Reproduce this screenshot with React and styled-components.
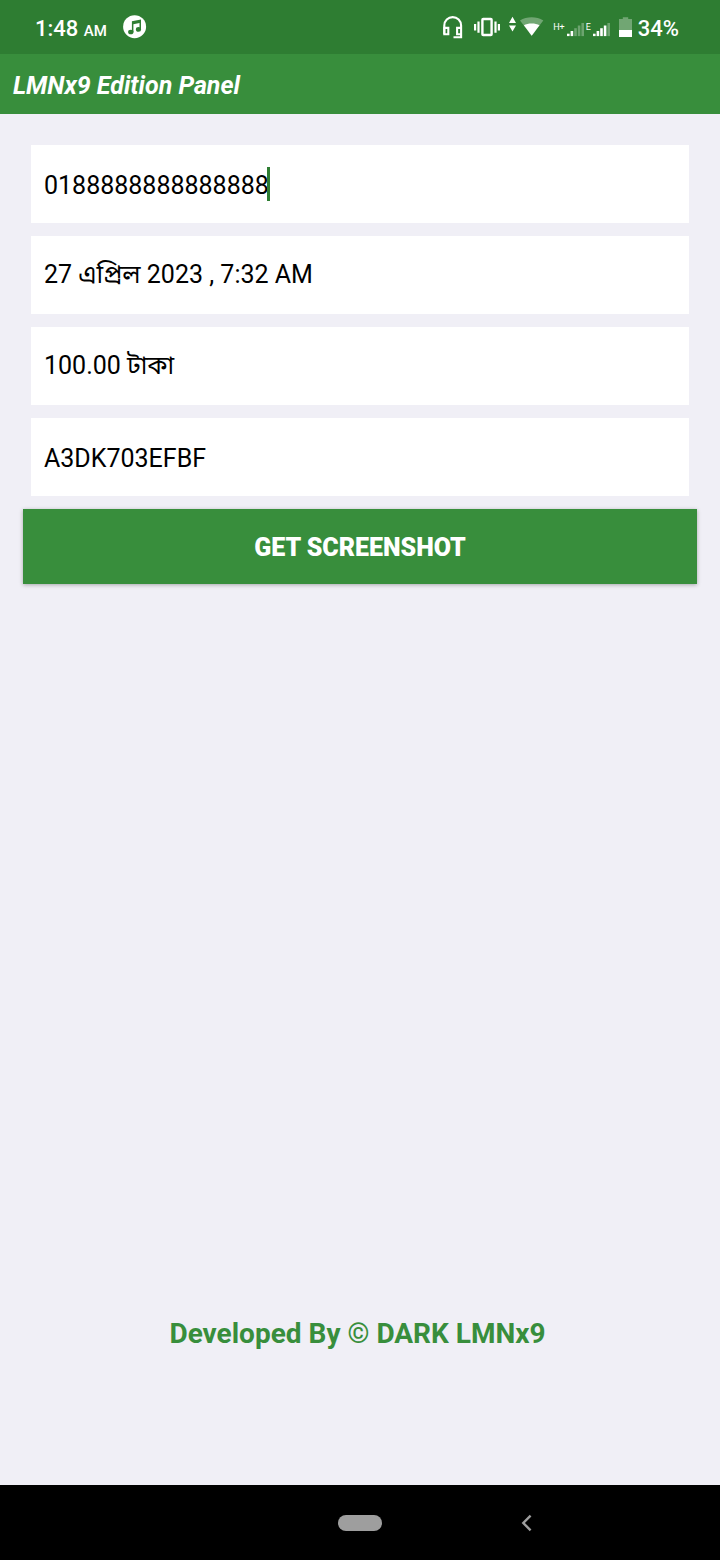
import React, { useState } from "react";
import styled, { createGlobalStyle } from "styled-components";

const GlobalStyle = createGlobalStyle`
  *, *::before, *::after { box-sizing: border-box; }
  body {
    margin: 0;
    background: #f0eff6;
    font-family: Roboto, "Noto Sans Bengali", "Noto Sans", sans-serif;
  }
`;

const Screen = styled.div`
  display: flex;
  flex-direction: column;
  min-height: 100vh;
`;

const StatusBar = styled.div`
  display: flex;
  align-items: center;
  justify-content: space-between;
  height: 54px;
  padding: 0 41px 0 35px;
  background: #2e7d32;
  color: #fff;
`;

const StatusGroup = styled.div`
  display: flex;
  align-items: center;
  gap: ${({ $gap }) => $gap}px;
`;

const StatusText = styled.span`
  padding-top: 4px;
  font-size: 22px;
  line-height: 26px;
  font-weight: 500;
`;

const Meridiem = styled.small`
  font-size: 15px;
  line-height: 1;
`;

const NetworkType = styled.span`
  font-size: 9px;
  line-height: 12px;
`;

const Icon = styled.svg`
  display: block;
  flex: none;
`;

const TitleBar = styled.header`
  display: flex;
  align-items: center;
  height: 60px;
  padding: 4px 13px 0;
  background: #388e3c;
  color: #fff;
`;

const Title = styled.h1`
  margin: 0;
  font-size: 25px;
  line-height: 30px;
  font-weight: 700;
  font-style: italic;
`;

const Content = styled.main`
  flex: 1;
  display: flex;
  flex-direction: column;
  padding: 31px 23px 0;
`;

const Form = styled.form`
  display: flex;
  flex-direction: column;
  gap: 13px;
`;

const Field = styled.label`
  display: flex;
  align-items: center;
  height: 78px;
  margin: 0 8px;
  padding: 0 13px;
  background: #fff;
`;

const TextInput = styled.input`
  width: ${({ $chars }) => ($chars ? `${$chars}ch` : "100%")};
  height: 58px;
  padding: 2px 0 0;
  border: 0;
  outline: 0;
  background: transparent;
  color: #000;
  font-family: inherit;
  font-size: 25px;
  line-height: 56px;
  caret-color: ${({ $chars }) => ($chars ? "transparent" : "#2e7d32")};
`;

const Caret = styled.span`
  width: 3px;
  height: 34px;
  margin-left: -2px;
  background: #2e7d32;
`;

const SubmitButton = styled.button`
  height: 75px;
  padding: 2px 16px 0;
  border: 0;
  background: #388e3c;
  box-shadow: 0 1px 4px rgba(0, 0, 0, 0.3);
  color: #fff;
  font-family: inherit;
  font-size: 25px;
  line-height: 30px;
  font-weight: 900;
  cursor: pointer;
`;

const Credit = styled.footer`
  margin-top: auto;
  padding: 32px 5px 134px 0;
  color: #388e3c;
  font-size: 28px;
  line-height: 34px;
  font-weight: 700;
  text-align: center;
`;

const NavBar = styled.nav`
  display: grid;
  grid-template-columns: repeat(3, 1fr);
  align-items: center;
  justify-items: center;
  height: 75px;
  padding: 0 110px;
  background: #000;
`;

const NavButton = styled.button`
  display: flex;
  align-items: center;
  justify-content: center;
  grid-column: ${({ $column }) => $column};
  grid-row: 1;
  width: 60px;
  height: 48px;
  padding: 0;
  border: 0;
  background: transparent;
  color: #9e9e9e;
`;

const HomePill = styled.span`
  width: 44px;
  height: 16px;
  border-radius: 8px;
  background: #9e9e9e;
`;

const MusicIcon = () => (
  <Icon width="24" height="24" viewBox="0 0 24 24">
    <circle cx="11.6" cy="11.7" r="11.5" fill="#fff" />
    <path d="M8.9 6.2 18 4.6v9.7h-1.5V8.1l-6.1 1.1v8.1H8.9z" fill="#2e7d32" />
    <ellipse cx="7.8" cy="17" rx="2.7" ry="2.3" fill="#2e7d32" />
    <ellipse cx="15.5" cy="14.4" rx="2.6" ry="2.3" fill="#2e7d32" />
  </Icon>
);

const HeadsetIcon = () => (
  <Icon width="22" height="24" viewBox="0 0 22 24" fill="none" stroke="#fff" strokeWidth="2.1">
    <path d="M1.3 19V10.500a8.400 8.400 0 0 1 16.800 0V22.200H10.500" />
    <path d="M1.3 12.900h4v6.300h-4zM18.100 12.900h-4v6.300h4" />
  </Icon>
);

const VibrateIcon = () => (
  <Icon width="26" height="24" viewBox="0 0 26 24" fill="#fff">
    <rect x="8.4" y="4" width="9.200" height="16" rx="0.8" fill="none" stroke="#fff" strokeWidth="2.4" />
    <path d="M0 9h2.200v6.400H0zM3.400 6.600h2.200v11.200H3.400zM20.400 6.600h2.200v11.200h-2.200zM23.800 9h2.200v6.400h-2.200z" />
  </Icon>
);

const WifiIcon = () => (
  <Icon width="35" height="24" viewBox="0 0 35 24" fill="#fff">
    <path d="M0 7.900 3.500 1.800 7 7.900zM0 10.500h7l-3.500 6z" />
    <path d="M11 5.400C17.700 1.200 27.600 1.200 34.300 5.400L22.700 20.700z" opacity="0.32" />
    <path d="M14.900 10.300C18.800 7.800 26.600 7.800 30.500 10.300L22.700 20.700z" />
  </Icon>
);

const SIGNAL_TOPS = [18.7, 16, 13.2, 10.5, 8];

const SignalIcon = ({ level }) => (
  <Icon width="17" height="24" viewBox="0 0 17 24" fill="#fff">
    {SIGNAL_TOPS.map((top, i) => (
      <rect
        key={top}
        x={i * 3.6}
        y={top}
        width="2.6"
        height={21.1 - top}
        opacity={i < level ? 1 : 0.3}
      />
    ))}
  </Icon>
);

const BatteryIcon = () => (
  <Icon width="13" height="24" viewBox="0 0 13 24" fill="#fff">
    <path d="M0 4h3.800V2.300h5.400V4H13V15H0z" opacity="0.32" />
    <path d="M0 15h13v7H0z" />
  </Icon>
);

const BackIcon = () => (
  <Icon width="12" height="18" viewBox="0 0 12 18" fill="none" stroke="currentColor" strokeWidth="2.4">
    <path d="M9.600 1.700 2.300 9 9.600 16.300" />
  </Icon>
);

const FIELDS = [
  { name: "number", label: "Number", value: "0188888888888888", active: true },
  { name: "date", label: "Date and time", value: "27 এপ্রিল 2023 , 7:32 AM" },
  { name: "amount", label: "Amount", value: "100.00 টাকা" },
  { name: "transaction", label: "Transaction ID", value: "A3DK703EFBF" },
];

function FormField({ name, label, value, active }) {
  const [text, setText] = useState(value);
  return (
    <Field>
      <TextInput
        type="text"
        name={name}
        aria-label={label}
        value={text}
        onChange={(event) => setText(event.target.value)}
        $chars={active ? text.length : 0}
      />
      {active && <Caret />}
    </Field>
  );
}

export default function App() {
  return (
    <Screen>
      <GlobalStyle />
      <StatusBar>
        <StatusGroup $gap={16}>
          <StatusText>
            1:48 <Meridiem>AM</Meridiem>
          </StatusText>
          <MusicIcon />
        </StatusGroup>
        <StatusGroup $gap={6}>
          <StatusGroup $gap={9}>
            <HeadsetIcon />
            <VibrateIcon />
            <WifiIcon />
            <StatusGroup $gap={2}>
              <NetworkType>H+</NetworkType>
              <SignalIcon level={2} />
              <NetworkType>E</NetworkType>
              <SignalIcon level={4} />
            </StatusGroup>
            <BatteryIcon />
          </StatusGroup>
          <StatusText>34%</StatusText>
        </StatusGroup>
      </StatusBar>
      <TitleBar>
        <Title>LMNx9 Edition Panel</Title>
      </TitleBar>
      <Content>
        <Form onSubmit={(event) => event.preventDefault()}>
          {FIELDS.map((field) => (
            <FormField key={field.name} {...field} />
          ))}
          <SubmitButton type="submit">GET SCREENSHOT</SubmitButton>
        </Form>
        <Credit>Developed By © DARK LMNx9</Credit>
      </Content>
      <NavBar>
        <NavButton type="button" aria-label="Home" $column={2}>
          <HomePill />
        </NavButton>
        <NavButton type="button" aria-label="Back" $column={3}>
          <BackIcon />
        </NavButton>
      </NavBar>
    </Screen>
  );
}
